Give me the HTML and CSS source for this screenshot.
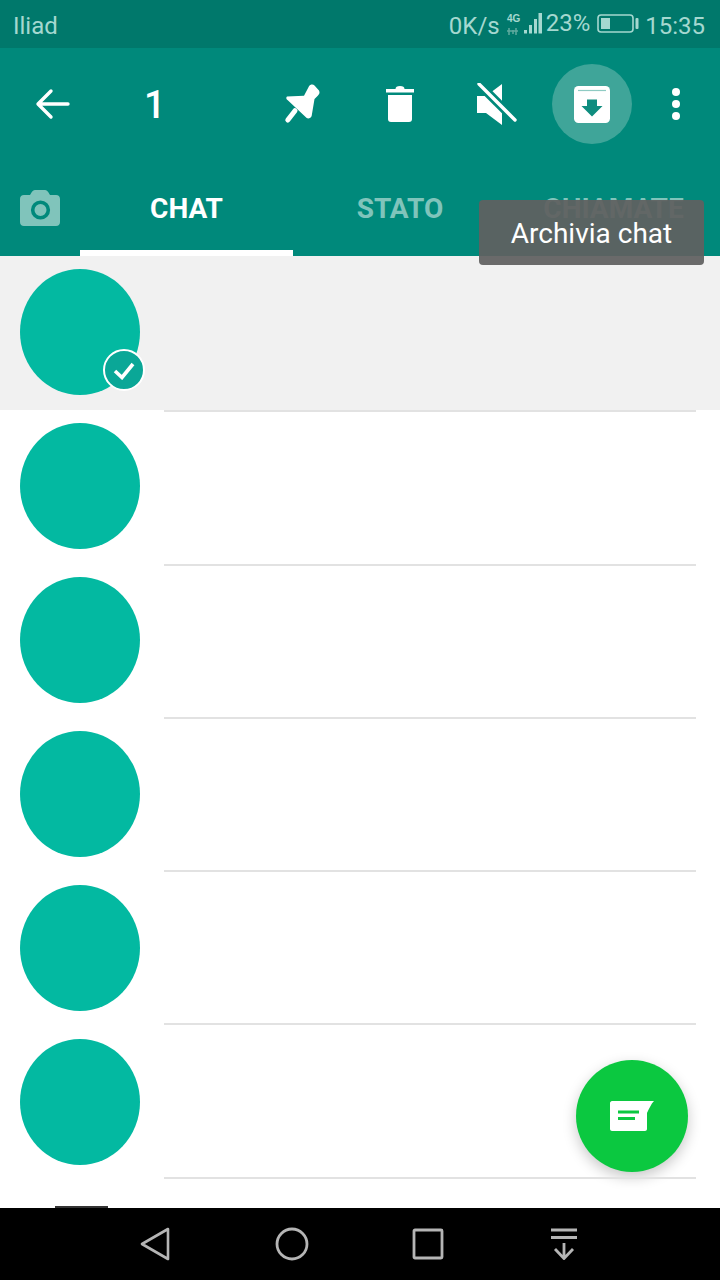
FILE: index.html
```html
<!DOCTYPE html>
<html lang="it">
<head>
    <meta charset="UTF-8">
    <meta name="viewport" content="width=device-width, initial-scale=1.0">
    <title>Chat</title>
    <link rel="stylesheet" href="styles.css">
</head>
<body>
    <div id="phone">
        <div class="status">
            <span class="carrier">Iliad</span>
            <div class="status-right">
                <span class="speed">0K/s</span>
                <svg class="signal" width="40" height="36" viewBox="0 0 40 36">
                    <text x="3" y="16" class="net">4G</text>
                    <path d="M5 22v7M9 24v4M12 22v7M3 25h11" class="arrows"/>
                    <rect x="20" y="24" width="3" height="3.500" fill="#a5d8d0"/>
                    <rect x="25" y="19" width="3" height="8.500" fill="#a5d8d0"/>
                    <rect x="30" y="13" width="3" height="14.500" fill="#a5d8d0"/>
                    <rect x="34.500" y="7" width="3.500" height="20.500" fill="#a5d8d0"/>
                </svg>
                <span class="pct">23%</span>
                <svg class="battery" width="42" height="22" viewBox="0 0 42 22">
                    <rect x="1" y="2" width="35" height="17" rx="3" fill="none" stroke="#a5d8d0" stroke-width="1.600"/>
                    <rect x="4" y="5" width="9" height="11" fill="#a5d8d0"/>
                    <rect x="38.500" y="5" width="3" height="11" rx="1" fill="#a5d8d0"/>
                </svg>
                <span class="clock">15:35</span>
            </div>
        </div>

        <div class="toolbar">
            <button class="tool back">
                <svg width="36" height="36" viewBox="0 0 36 36"><path d="M34 18H5M17 5 4 18l13 13" fill="none" stroke="#fff" stroke-width="3.400" stroke-linecap="round" stroke-linejoin="round"/></svg>
            </button>
            <span class="count">1</span>
            <button class="tool pin">
                <svg width="38" height="42" viewBox="0 0 38 42"><path d="M4 13.500 21 12.700 26 3.300C27 1.500 30 1 31.500 2.500L36 7.500C37 9.500 36.500 11 35 12.500L31.500 16 28.700 32.700C28 35 25.500 36 23.700 35L4.500 17C3 16 3 14.500 4 13.500z" fill="#fff"/><path d="M12 27.700 4.800 37" stroke="#fff" stroke-width="5" stroke-linecap="round"/></svg>
            </button>
            <button class="tool trash">
                <svg width="28" height="36" viewBox="0 0 28 36"><path d="M0 3h28v3.500H0zM9.500 3c0-2 1.500-3 4.500-3s4.500 1 4.500 3z" fill="#fff"/><path d="M2 9h24v24c0 2-1 3-3 3H5c-2 0-3-1-3-3z" fill="#fff"/></svg>
            </button>
            <button class="tool mute">
                <svg width="44" height="42" viewBox="0 0 44 42"><path d="M3 13h9L28 1v41L12 30H3z" fill="#fff"/><path d="M5 1 41 37" stroke="#00897b" stroke-width="9"/><path d="M5 1 41 37" stroke="#fff" stroke-width="3.400" stroke-linecap="round"/></svg>
            </button>
            <button class="tool archive">
                <svg width="36" height="37" viewBox="0 0 36 37"><rect width="36" height="37" rx="4.500" fill="#fff"/><path d="M4 4.500h28" stroke="#8fcbc3" stroke-width="1.200"/><path d="M13 13.500h10V20h5.500L18 30.500 7.500 20H13z" fill="#0f8d7f"/></svg>
            </button>
            <button class="tool more">
                <span></span><span></span><span></span>
            </button>
        </div>

        <div class="tabs">
            <div class="tab-camera">
                <svg width="40" height="36" viewBox="0 0 40 36"><path d="M4 5h6l1.500-2.500C12.500 1 13.500 0 15 0h10c1.500 0 2.500 1 3.500 2.500L30 5h6c2.500 0 4 1.500 4 4v23c0 2.500-1.500 4-4 4H4c-2.500 0-4-1.500-4-4V9c0-2.500 1.500-4 4-4z" fill="#80c4bb"/><circle cx="20.500" cy="20" r="7.800" fill="#80c4bb" stroke="#00897b" stroke-width="3.600"/></svg>
            </div>
            <div class="tab active">CHAT</div>
            <div class="tab">STATO</div>
            <div class="tab">CHIAMATE</div>
        </div>

        <div class="list">
            <div class="row selected">
                <div class="avatar">
                    <span class="tick">
                        <svg width="24" height="20" viewBox="0 0 24 20"><path d="M3 11l7 6.500L21 4" fill="none" stroke="#fff" stroke-width="3.600"/></svg>
                    </span>
                </div>
                <div class="line"></div>
            </div>
            <div class="row"><div class="avatar"></div><div class="line"></div></div>
            <div class="row"><div class="avatar"></div><div class="line"></div></div>
            <div class="row"><div class="avatar"></div><div class="line"></div></div>
            <div class="row"><div class="avatar"></div><div class="line"></div></div>
            <div class="row"><div class="avatar"></div><div class="line"></div></div>
        </div>

        <div class="hint">Archivia chat</div>

        <button class="fab">
            <svg width="44" height="32" viewBox="0 0 44 32"><path d="M2 1h42c-3 3-5 8-7 12v16c0 1-1 2-2 2H2c-1 0-2-1-2-2V3c0-1 1-2 2-2z" fill="#fff"/><path d="M8 10.500h21v3H8zM8 17h17v3H8z" fill="#0bc840"/></svg>
        </button>

        <div class="smudge"></div>

        <div class="navbar">
            <svg width="30" height="34" viewBox="0 0 30 34"><path d="M28 2 2 17l26 15z" fill="none" stroke="#b5b5b5" stroke-width="2.600" stroke-linejoin="round"/></svg>
            <svg width="34" height="34" viewBox="0 0 34 34"><circle cx="17" cy="17" r="15" fill="none" stroke="#b5b5b5" stroke-width="2.800"/></svg>
            <svg width="32" height="32" viewBox="0 0 32 32"><rect x="2" y="2" width="28" height="28" rx="1" fill="none" stroke="#b5b5b5" stroke-width="2.800"/></svg>
            <svg width="30" height="32" viewBox="0 0 30 32"><path d="M2 2h26M2 9.500h26M15 15v15M6 21l9 9.500 9-9.500" fill="none" stroke="#b5b5b5" stroke-width="2.800"/></svg>
        </div>
    </div>
</body>
</html>
```
FILE: styles.css
```css
* {
    margin: 0;
    padding: 0;
    box-sizing: border-box;
}

body {
    background-color: #fff;
    font-family: Roboto, "Liberation Sans", sans-serif;
}

#phone {
    width: 720px;
    height: 1280px;
    position: relative;
    overflow: hidden;
    display: flex;
    flex-direction: column;
}

button {
    border: none;
    background: none;
}

.status {
    height: 48px;
    flex: none;
    background-color: #00786b;
    color: #a5d8d0;
    display: flex;
    justify-content: space-between;
    align-items: center;
    padding: 3px 15px 0 13px;
    font-size: 24px;
}

.status-right {
    display: flex;
    align-items: center;
}

.speed {
    margin-right: 4px;
}

.net {
    font: bold 10px "Liberation Sans", sans-serif;
    fill: #a5d8d0;
}

.arrows {
    stroke: #5fa99f;
    stroke-width: 1.500;
    fill: none;
}

.signal {
    margin: -3px 2px 0 0;
}

.pct {
    margin-top: -5px;
}

.battery {
    margin: -3px 6px 0 7px;
}

.toolbar {
    height: 120px;
    flex: none;
    background-color: #00897b;
    display: grid;
    grid-template-columns: 104px 153px 90px 106px 86px 106px 62px;
    align-items: center;
    padding-bottom: 8px;
}

.tool {
    display: flex;
    align-items: center;
    justify-content: center;
    height: 80px;
}

.count {
    color: #fff;
    font-size: 38px;
    font-weight: 500;
    padding: 2px 0 0 40px;
}

.archive {
    width: 80px;
    justify-self: center;
    border-radius: 50%;
    background-color: #3fa599;
}

.more {
    flex-direction: column;
    gap: 4px;
}

.more span {
    width: 8px;
    height: 8px;
    border-radius: 50%;
    background-color: #fff;
}

.tabs {
    height: 88px;
    flex: none;
    background-color: #00897b;
    display: grid;
    grid-template-columns: 80px 213px 214px 213px;
    box-shadow: 0 5px 5px -3px rgba(0, 0, 0, .25);
    position: relative;
    color: #80c4bb;
    font-size: 28px;
    font-weight: 700;
    text-align: center;
}

.tab-camera {
    padding: 22px 0 0 20px;
    text-align: left;
}

.tab {
    padding-top: 24px;
    height: 88px;
}

.tab.active {
    color: #fff;
    border-bottom: 6px solid #fff;
}

.list {
    flex: 1;
    overflow: hidden;
}

.row {
    height: 154px;
    position: relative;
    padding: 13px 0 0 20px;
}

.selected {
    background-color: #f1f1f1;
}

.avatar {
    width: 120px;
    height: 126px;
    border-radius: 50%;
    background-color: #03b9a1;
    position: relative;
}

.tick {
    position: absolute;
    right: -5px;
    bottom: 4px;
    width: 42px;
    height: 42px;
    border-radius: 50%;
    background-color: #0aa797;
    border: 2px solid #fff;
    display: flex;
    align-items: center;
    justify-content: center;
}

.line {
    position: absolute;
    left: 164px;
    right: 24px;
    bottom: -2px;
    height: 2px;
    background-color: #e2e2e2;
    z-index: 1;
}

.row:nth-child(3) .line {
    bottom: -1px;
}

.row:nth-child(4) .line {
    bottom: 0;
}

.row:nth-child(5) .line,
.row:nth-child(6) .line {
    bottom: 1px;
}

.hint {
    position: absolute;
    top: 200px;
    left: 479px;
    width: 225px;
    height: 65px;
    border-radius: 4px;
    background-color: rgba(96, 96, 96, .93);
    color: #fff;
    font-size: 28px;
    text-align: center;
    line-height: 68px;
}

.fab {
    position: absolute;
    left: 576px;
    top: 1060px;
    width: 112px;
    height: 112px;
    border-radius: 50%;
    background-color: #0bc840;
    box-shadow: 0 5px 14px rgba(0, 0, 0, .22);
    display: flex;
    align-items: center;
    justify-content: center;
}

.smudge {
    position: absolute;
    left: 55px;
    top: 1206px;
    width: 53px;
    height: 2px;
    background-color: #333;
}

.navbar {
    position: absolute;
    left: 0;
    right: 0;
    bottom: 0;
    height: 72px;
    background-color: #000;
    display: grid;
    grid-template-columns: 135px 137px 137px 137px;
    padding-left: 140px;
    align-items: center;
}
```
